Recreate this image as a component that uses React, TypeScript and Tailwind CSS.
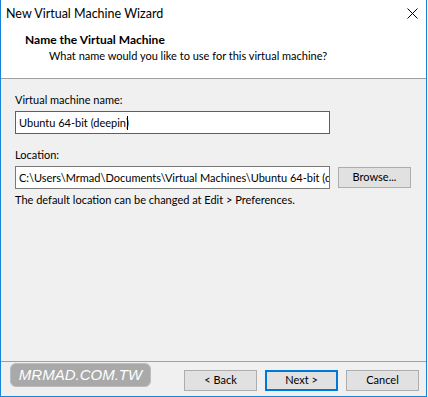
const font = { fontFamily: 'Lato, "Segoe UI", sans-serif' };

type BtnProps = {
    label: string;
    primary?: boolean;
};

function Btn({ label, primary }: BtnProps) {
    return (
        <div
            className={
                primary
                    ? "shrink-0 w-[73px] h-[21px] flex items-center justify-center bg-[#e1e1e1] border-2 border-[#0078d7] text-[11px] text-black"
                    : "shrink-0 w-[73px] h-[21px] flex items-center justify-center bg-[#e1e1e1] border border-[#adadad] text-[11px] text-black"
            }
        >
            {label}
        </div>
    );
}

export default function App() {
    return (
        <div className="w-[428px] h-[397px] bg-white" style={font}>
            <div className="w-[427px] h-[397px] flex flex-col border-x border-b border-[#1883d7]">
                {/* title bar */}
                <div className="h-[30px] shrink-0 flex items-start justify-between bg-white">
                    <span className="pl-[5px] pt-[5px] text-[12.5px] leading-[17px] text-black">New Virtual Machine Wizard</span>
                    <svg className="mt-[8px] mr-[8px]" width="11" height="11" viewBox="0 0 11 11">
                        <path d="M0.5 0.5 L10.5 10.5 M10.5 0.5 L0.5 10.5" stroke="#000" strokeWidth="1" />
                    </svg>
                </div>

                {/* header */}
                <div className="h-[48px] shrink-0 bg-white pl-[24px] pt-[2px]">
                    <div className="text-[12px] leading-[16px] font-bold text-black">Name the Virtual Machine</div>
                    <div className="pl-[24px] text-[11px] leading-[16px] text-black">What name would you like to use for this virtual machine?</div>
                </div>
                <div className="h-px shrink-0 bg-[#a0a0a0]" />

                {/* body */}
                <div className="flex-1 bg-[#f0f0f0] px-[14px] pt-[13px] text-[11px] text-black">
                    <div className="leading-[16px]">Virtual machine name:</div>
                    <div className="mt-[3px] w-[315px] h-[23px] bg-white border border-[#0078d7] flex items-center pl-[3px] leading-[16px]">
                        <span>Ubuntu 64-bit (deepin</span>
                        <span className="relative">
                            )
                            <span className="absolute left-[1px] top-[1px] w-px h-[14px] bg-black" />
                        </span>
                    </div>

                    <div className="mt-[13px] leading-[16px]">Location:</div>
                    <div className="mt-[3px] flex items-center gap-[8px]">
                        <div className="shrink-0 w-[315px] h-[23px] bg-white border border-[#7a7a7a] pl-[3px] overflow-hidden whitespace-nowrap leading-[21px]">
                            C:\Users\Mrmad\Documents\Virtual Machines\Ubuntu 64-bit (deepin)
                        </div>
                        <Btn label="Browse..." />
                    </div>

                    <div className="mt-[3px] leading-[16px]">The default location can be changed at Edit &gt; Preferences.</div>
                </div>

                {/* footer */}
                <div className="h-px shrink-0 bg-[#a0a0a0]" />
                <div className="h-[34px] shrink-0 bg-[#f0f0f0] flex items-start pl-[9px] pr-[7px]">
                    <div className="shrink-0 mt-[1px] w-[141px] h-[24px] rounded-[6px] bg-[#a9a9a9] border border-[#bcbcbc] flex items-center justify-center overflow-hidden">
                        <span
                            className="text-[15px] leading-[18px] italic text-white whitespace-nowrap"
                            style={{ fontFamily: '"Liberation Sans", Arial, sans-serif' }}
                        >
                            MRMAD.COM.TW
                        </span>
                    </div>
                    <div className="ml-auto mt-[8px] flex gap-[8px]">
                        <Btn label="< Back" />
                        <Btn label="Next >" primary />
                        <Btn label="Cancel" />
                    </div>
                </div>
            </div>
        </div>
    );
}
